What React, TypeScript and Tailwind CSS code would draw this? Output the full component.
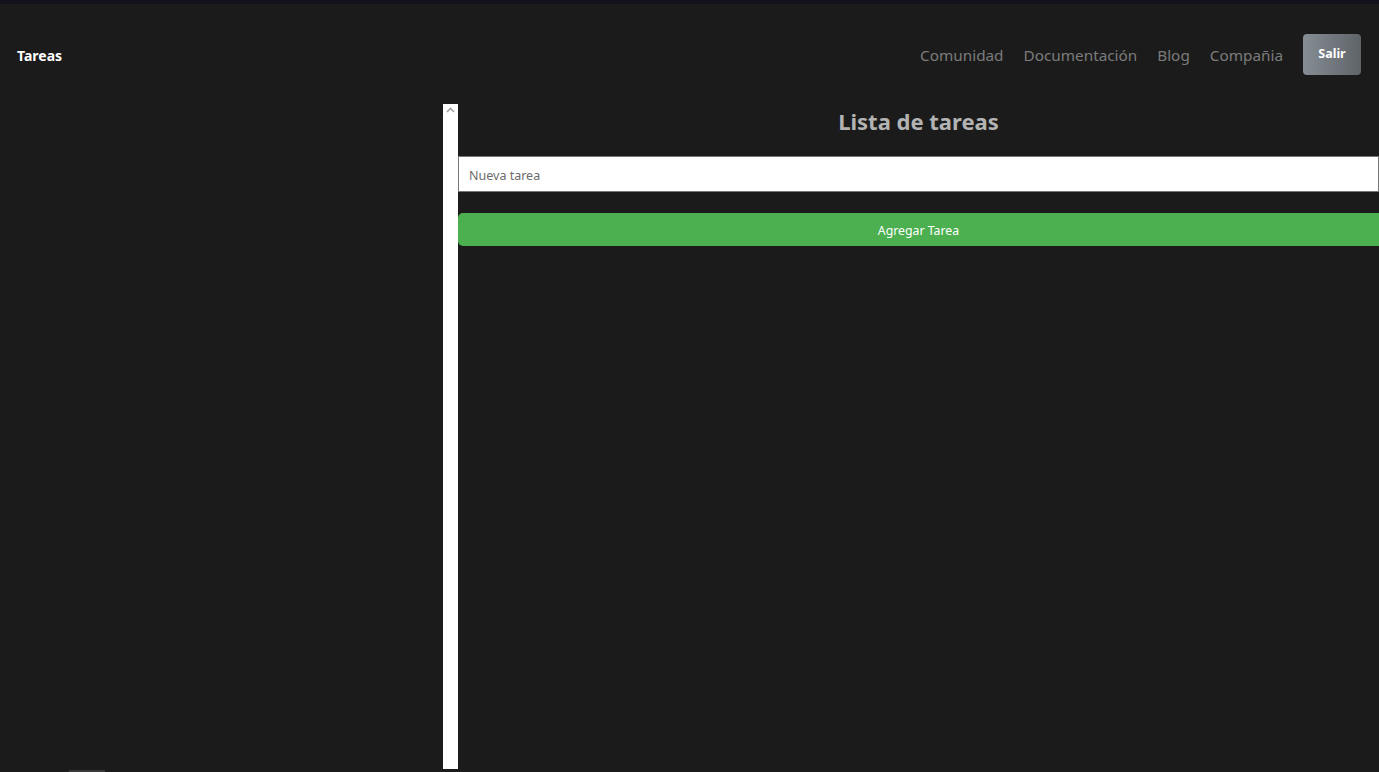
import { useState } from 'react'

const links = ['Comunidad', 'Documentación', 'Blog', 'Compañia']

export default function App() {
  const [task, setTask] = useState('')

  return (
    <div className="relative flex h-screen w-full flex-col overflow-hidden bg-[#1b1b1b] font-['Noto_Sans',sans-serif]">
      <div className="h-[4px] shrink-0 bg-[#13121c]" />

      <header className="flex h-[100px] shrink-0 items-center justify-between pl-[17px] pr-[18px]">
        <span className="pt-[2px] text-[14px] font-bold text-white">Tareas</span>
        <nav className="flex items-center gap-[20px]">
          {links.map((l) => (
            <a key={l} href="#" className="pt-[2px] text-[15.3px] text-[#7b7b7b]">
              {l}
            </a>
          ))}
          <button className="h-[41px] w-[58px] rounded-[4px] bg-gradient-to-r from-[#868d94] to-[#5e6468] pt-[1px] text-[12.5px] font-bold text-white">
            Salir
          </button>
        </nav>
      </header>

      <main className="flex min-h-0 flex-1">
        <aside className="w-[443px] shrink-0" />

        {/* fake scrollbar strip */}
        <div className="mb-[3px] flex w-[15px] shrink-0 justify-center bg-white pt-[3px]">
          <svg width="9" height="6" viewBox="0 0 9 6">
            <path d="M1 5 L4.5 1.5 L8 5" fill="none" stroke="#a3a3a3" strokeWidth="1.6" />
          </svg>
        </div>

        <section className="flex flex-1 flex-col">
          <h1 className="text-center text-[22px] font-bold leading-[34px] text-[#b3b3b3]">Lista de tareas</h1>
          <input
            value={task}
            onChange={(e) => setTask(e.target.value)}
            placeholder="Nueva tarea"
            className="mt-[18px] h-[36px] w-full border border-[#767676] bg-white px-[10px] pt-[2px] text-[12.5px] text-[#333] outline-none placeholder:text-[#6b6b6b]"
          />
          <button className="mt-[21px] h-[33px] w-full rounded-l-[5px] bg-[#4caf50] pt-[3px] text-[12.3px] text-white">
            Agregar Tarea
          </button>
        </section>
      </main>

      <div className="absolute bottom-0 left-[69px] h-[2px] w-[36px] bg-[#3a3a3a]" />
    </div>
  )
}
